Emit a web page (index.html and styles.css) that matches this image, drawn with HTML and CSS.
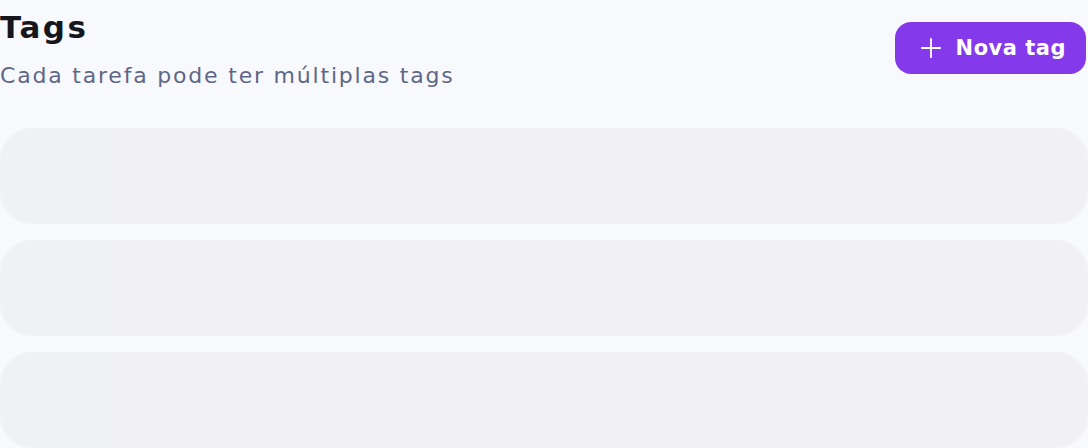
FILE: index.html
```html
<!DOCTYPE html>
<html lang="pt-BR">

<head>
    <meta charset="UTF-8">
    <meta name="viewport" content="width=device-width, initial-scale=1.0">
    <title>Tags</title>
    <link rel="stylesheet" href="styles.css">
</head>

<body>
    <div class="page">
        <div class="header">
            <div class="heading">
                <h1>Tags</h1>
                <p class="subtitle">Cada tarefa pode ter múltiplas tags</p>
            </div>
            <button class="new-tag">
                <svg width="22" height="22" viewBox="0 0 24 24" fill="none" stroke="currentColor"
                    stroke-width="2" stroke-linecap="round">
                    <path d="M12 2v20M2 12h20" />
                </svg>
                Nova tag
            </button>
        </div>

        <!-- loading placeholders -->
        <div class="tag-list">
            <div class="skeleton"></div>
            <div class="skeleton"></div>
            <div class="skeleton"></div>
        </div>
    </div>
</body>

</html>
```

FILE: styles.css
```css
body {
    margin: 0;
    padding: 0;
    background-color: #f8f9fd;
    font-family: "DejaVu Sans", Inter, sans-serif;
}

.page {
    display: flex;
    flex-direction: column;
}

.header {
    display: flex;
    justify-content: space-between;
    align-items: flex-start;
    height: 128px;
}

.heading h1 {
    margin: 0;
    padding-top: 7px;
    font-size: 31px;
    line-height: 40px;
    font-weight: 700;
    color: #16161d;
    letter-spacing: 2.4px;
}

.subtitle {
    margin: 14px 0 0;
    font-size: 22px;
    line-height: 30px;
    color: #5f6787;
    letter-spacing: 1.8px;
}

.new-tag {
    display: flex;
    align-items: center;
    gap: 14px;
    margin-top: 22px;
    margin-right: 2px;
    height: 52px;
    padding: 0 20px 0 25px;
    border: none;
    border-radius: 16px;
    background-color: #8439ea;
    color: #fff;
    font-family: "DejaVu Sans", Inter, sans-serif;
    font-size: 21px;
    font-weight: 700;
    letter-spacing: 0.5px;
    cursor: pointer;
}

.tag-list {
    display: flex;
    flex-direction: column;
    gap: 16px;
}

.skeleton {
    height: 96px;
    border-radius: 32px;
    background: linear-gradient(90deg, #f0f1f5, #f1f0f5);
}
```
